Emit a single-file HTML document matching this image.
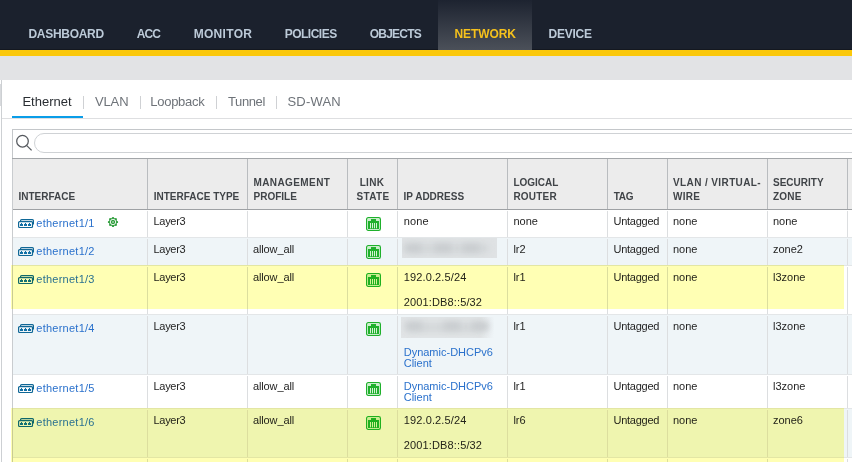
<!DOCTYPE html>
<html><head><meta charset="utf-8"><style>
html,body{margin:0;padding:0;width:852px;height:462px;overflow:hidden;background:#fff;font-family:"Liberation Sans", sans-serif}
body{position:relative}
</style></head><body>
<div style="position:absolute;left:0;top:0;width:852px;height:50px;background:#1b212d"></div>
<div style="position:absolute;left:0;top:49px;width:852px;height:1px;background:#141820"></div>
<div style="position:absolute;left:438px;top:0;width:94px;height:50px;background:linear-gradient(#1d2330,#4b5059)"></div>
<div style="position:absolute;left:0;top:50px;width:852px;height:6px;background:#fbc80b"></div>
<div style="position:absolute;left:0;top:56px;width:852px;height:24px;background:#e2e3e5"></div>
<div style="position:absolute;left:2px;top:80px;width:850px;height:382px;background:#fff"></div>
<div style="position:absolute;left:1px;top:80px;width:1px;height:382px;background:#cdd0d3"></div>
<div style="position:absolute;left:0px;top:84px;width:1px;height:22px;background:#d8dadd"></div>
<div style="position:absolute;left:2px;top:118px;width:850px;height:1px;background:#dedfe1"></div>
<div style="position:absolute;left:12px;top:116px;width:71px;height:2px;background:#0a9de8"></div>
<div style="position:absolute;left:83px;top:96px;width:1px;height:13px;background:#cfd1d4"></div>
<div style="position:absolute;left:140px;top:96px;width:1px;height:13px;background:#cfd1d4"></div>
<div style="position:absolute;left:216px;top:96px;width:1px;height:13px;background:#cfd1d4"></div>
<div style="position:absolute;left:276px;top:96px;width:1px;height:13px;background:#cfd1d4"></div>
<div style="position:absolute;left:12px;top:129px;width:850px;height:29px;border-top:1px solid #c4c7ca;border-left:1px solid #c4c7ca;box-sizing:border-box;background:#fff"></div>
<div style="position:absolute;left:34px;top:133px;width:830px;height:20px;border:1px solid #cfd2d5;border-radius:10px;box-sizing:border-box;background:#fff"></div>
<svg style="position:absolute;left:12px;top:131px" width="24" height="24" viewBox="0 0 24 24"><circle cx="10.5" cy="10.2" r="5.8" fill="none" stroke="#55595e" stroke-width="1.25"/><line x1="14.8" y1="14.6" x2="19.6" y2="19.4" stroke="#55595e" stroke-width="1.3"/></svg>
<div style="position:absolute;left:12px;top:158px;width:840px;height:52px;background:#ececec;border-top:1px solid #a3a6a9;border-bottom:1px solid #9ea1a4;box-sizing:border-box"></div>
<div style="position:absolute;left:147px;top:159px;width:1px;height:50px;background:#b9bcbf"></div>
<div style="position:absolute;left:247px;top:159px;width:1px;height:50px;background:#b9bcbf"></div>
<div style="position:absolute;left:347px;top:159px;width:1px;height:50px;background:#b9bcbf"></div>
<div style="position:absolute;left:397px;top:159px;width:1px;height:50px;background:#b9bcbf"></div>
<div style="position:absolute;left:507px;top:159px;width:1px;height:50px;background:#b9bcbf"></div>
<div style="position:absolute;left:607px;top:159px;width:1px;height:50px;background:#b9bcbf"></div>
<div style="position:absolute;left:667px;top:159px;width:1px;height:50px;background:#b9bcbf"></div>
<div style="position:absolute;left:767px;top:159px;width:1px;height:50px;background:#b9bcbf"></div>
<div style="position:absolute;left:847px;top:159px;width:1px;height:50px;background:#b9bcbf"></div>
<div style="position:absolute;left:12px;top:210px;width:840px;height:27px;background:#ffffff"></div>
<div style="position:absolute;left:147px;top:211px;width:1px;height:26px;background:#dcdee0"></div>
<div style="position:absolute;left:247px;top:211px;width:1px;height:26px;background:#dcdee0"></div>
<div style="position:absolute;left:347px;top:211px;width:1px;height:26px;background:#dcdee0"></div>
<div style="position:absolute;left:397px;top:211px;width:1px;height:26px;background:#dcdee0"></div>
<div style="position:absolute;left:507px;top:211px;width:1px;height:26px;background:#dcdee0"></div>
<div style="position:absolute;left:607px;top:211px;width:1px;height:26px;background:#dcdee0"></div>
<div style="position:absolute;left:667px;top:211px;width:1px;height:26px;background:#dcdee0"></div>
<div style="position:absolute;left:767px;top:211px;width:1px;height:26px;background:#dcdee0"></div>
<div style="position:absolute;left:847px;top:211px;width:1px;height:26px;background:#dcdee0"></div>
<div style="position:absolute;left:12px;top:238px;width:840px;height:27px;background:#eff5f8"></div>
<div style="position:absolute;left:12px;top:237px;width:840px;height:1px;background:#e3e6e8"></div>
<div style="position:absolute;left:147px;top:239px;width:1px;height:26px;background:#dcdee0"></div>
<div style="position:absolute;left:247px;top:239px;width:1px;height:26px;background:#dcdee0"></div>
<div style="position:absolute;left:347px;top:239px;width:1px;height:26px;background:#dcdee0"></div>
<div style="position:absolute;left:397px;top:239px;width:1px;height:26px;background:#dcdee0"></div>
<div style="position:absolute;left:507px;top:239px;width:1px;height:26px;background:#dcdee0"></div>
<div style="position:absolute;left:607px;top:239px;width:1px;height:26px;background:#dcdee0"></div>
<div style="position:absolute;left:667px;top:239px;width:1px;height:26px;background:#dcdee0"></div>
<div style="position:absolute;left:767px;top:239px;width:1px;height:26px;background:#dcdee0"></div>
<div style="position:absolute;left:847px;top:239px;width:1px;height:26px;background:#dcdee0"></div>
<div style="position:absolute;left:12px;top:266px;width:840px;height:48px;background:#ffffff"></div>
<div style="position:absolute;left:12px;top:265px;width:840px;height:1px;background:#e3e6e8"></div>
<div style="position:absolute;left:147px;top:267px;width:1px;height:47px;background:#dcdee0"></div>
<div style="position:absolute;left:247px;top:267px;width:1px;height:47px;background:#dcdee0"></div>
<div style="position:absolute;left:347px;top:267px;width:1px;height:47px;background:#dcdee0"></div>
<div style="position:absolute;left:397px;top:267px;width:1px;height:47px;background:#dcdee0"></div>
<div style="position:absolute;left:507px;top:267px;width:1px;height:47px;background:#dcdee0"></div>
<div style="position:absolute;left:607px;top:267px;width:1px;height:47px;background:#dcdee0"></div>
<div style="position:absolute;left:667px;top:267px;width:1px;height:47px;background:#dcdee0"></div>
<div style="position:absolute;left:767px;top:267px;width:1px;height:47px;background:#dcdee0"></div>
<div style="position:absolute;left:847px;top:267px;width:1px;height:47px;background:#dcdee0"></div>
<div style="position:absolute;left:12px;top:315px;width:840px;height:59px;background:#eff5f8"></div>
<div style="position:absolute;left:12px;top:314px;width:840px;height:1px;background:#e3e6e8"></div>
<div style="position:absolute;left:147px;top:316px;width:1px;height:58px;background:#dcdee0"></div>
<div style="position:absolute;left:247px;top:316px;width:1px;height:58px;background:#dcdee0"></div>
<div style="position:absolute;left:347px;top:316px;width:1px;height:58px;background:#dcdee0"></div>
<div style="position:absolute;left:397px;top:316px;width:1px;height:58px;background:#dcdee0"></div>
<div style="position:absolute;left:507px;top:316px;width:1px;height:58px;background:#dcdee0"></div>
<div style="position:absolute;left:607px;top:316px;width:1px;height:58px;background:#dcdee0"></div>
<div style="position:absolute;left:667px;top:316px;width:1px;height:58px;background:#dcdee0"></div>
<div style="position:absolute;left:767px;top:316px;width:1px;height:58px;background:#dcdee0"></div>
<div style="position:absolute;left:847px;top:316px;width:1px;height:58px;background:#dcdee0"></div>
<div style="position:absolute;left:12px;top:375px;width:840px;height:33px;background:#ffffff"></div>
<div style="position:absolute;left:12px;top:374px;width:840px;height:1px;background:#e3e6e8"></div>
<div style="position:absolute;left:147px;top:376px;width:1px;height:32px;background:#dcdee0"></div>
<div style="position:absolute;left:247px;top:376px;width:1px;height:32px;background:#dcdee0"></div>
<div style="position:absolute;left:347px;top:376px;width:1px;height:32px;background:#dcdee0"></div>
<div style="position:absolute;left:397px;top:376px;width:1px;height:32px;background:#dcdee0"></div>
<div style="position:absolute;left:507px;top:376px;width:1px;height:32px;background:#dcdee0"></div>
<div style="position:absolute;left:607px;top:376px;width:1px;height:32px;background:#dcdee0"></div>
<div style="position:absolute;left:667px;top:376px;width:1px;height:32px;background:#dcdee0"></div>
<div style="position:absolute;left:767px;top:376px;width:1px;height:32px;background:#dcdee0"></div>
<div style="position:absolute;left:847px;top:376px;width:1px;height:32px;background:#dcdee0"></div>
<div style="position:absolute;left:12px;top:409px;width:840px;height:48px;background:#eff5f8"></div>
<div style="position:absolute;left:12px;top:408px;width:840px;height:1px;background:#e3e6e8"></div>
<div style="position:absolute;left:147px;top:410px;width:1px;height:47px;background:#dcdee0"></div>
<div style="position:absolute;left:247px;top:410px;width:1px;height:47px;background:#dcdee0"></div>
<div style="position:absolute;left:347px;top:410px;width:1px;height:47px;background:#dcdee0"></div>
<div style="position:absolute;left:397px;top:410px;width:1px;height:47px;background:#dcdee0"></div>
<div style="position:absolute;left:507px;top:410px;width:1px;height:47px;background:#dcdee0"></div>
<div style="position:absolute;left:607px;top:410px;width:1px;height:47px;background:#dcdee0"></div>
<div style="position:absolute;left:667px;top:410px;width:1px;height:47px;background:#dcdee0"></div>
<div style="position:absolute;left:767px;top:410px;width:1px;height:47px;background:#dcdee0"></div>
<div style="position:absolute;left:847px;top:410px;width:1px;height:47px;background:#dcdee0"></div>
<div style="position:absolute;left:12px;top:458px;width:840px;height:22px;background:#ffffff"></div>
<div style="position:absolute;left:12px;top:457px;width:840px;height:1px;background:#e3e6e8"></div>
<div style="position:absolute;left:147px;top:459px;width:1px;height:21px;background:#dcdee0"></div>
<div style="position:absolute;left:247px;top:459px;width:1px;height:21px;background:#dcdee0"></div>
<div style="position:absolute;left:347px;top:459px;width:1px;height:21px;background:#dcdee0"></div>
<div style="position:absolute;left:397px;top:459px;width:1px;height:21px;background:#dcdee0"></div>
<div style="position:absolute;left:507px;top:459px;width:1px;height:21px;background:#dcdee0"></div>
<div style="position:absolute;left:607px;top:459px;width:1px;height:21px;background:#dcdee0"></div>
<div style="position:absolute;left:667px;top:459px;width:1px;height:21px;background:#dcdee0"></div>
<div style="position:absolute;left:767px;top:459px;width:1px;height:21px;background:#dcdee0"></div>
<div style="position:absolute;left:847px;top:459px;width:1px;height:21px;background:#dcdee0"></div>
<div style="position:absolute;left:12px;top:159px;width:1px;height:303px;background:#c9cccf"></div>
<div style="position:absolute;left:18px;top:219px;width:16px;height:10px"><svg style="display:block" width="16" height="10" viewBox="0 0 16 10"><path d="M2.6 2.2 V1.6 Q2.6 0.6 3.6 0.6 H14.4 Q15.4 0.6 15.4 1.6 V5.5" fill="none" stroke="#0f6796" stroke-width="1.2"/><rect x="0.6" y="2.6" width="13.9" height="5.9" rx="1" fill="none" stroke="#0f6796" stroke-width="1.2"/><path d="M2 7 V5 H3 V4 H4 V5 H5 V7Z M6 7 V5 H7 V4 H8 V5 H9 V7Z M10 7 V5 H11 V4 H12 V5 H13 V7Z" fill="#1270a6"/></svg></div>
<div style="position:absolute;left:366px;top:217px;width:15px;height:14px"><svg style="display:block" width="15" height="14" viewBox="0 0 15 14"><rect x="0.65" y="0.65" width="13.7" height="12.7" rx="1.6" fill="#fff" stroke="#1fb02c" stroke-width="1.3"/><rect x="1.8" y="1.5" width="11.4" height="2.6" fill="#c9eec9"/><path d="M2 12 V4 H5 V2 H10 V4 H13 V12Z" fill="#1fb02c"/><path d="M4.5 6 V11.3 M6.5 6 V11.3 M8.5 6 V11.3 M10.5 6 V11.3" stroke="#d4f2d4" stroke-width="1"/></svg></div>
<div style="position:absolute;left:107px;top:216px;width:12px;height:12px"><svg style="display:block" width="12" height="12" viewBox="0 0 12 12"><g fill="#34a042"><circle cx="6" cy="6" r="4"/><rect x="4.9" y="0.9" width="2.2" height="10.2" rx="0.9"/><rect x="0.9" y="4.9" width="10.2" height="2.2" rx="0.9"/><rect x="4.9" y="0.9" width="2.2" height="10.2" rx="0.9" transform="rotate(45 6 6)"/><rect x="0.9" y="4.9" width="10.2" height="2.2" rx="0.9" transform="rotate(45 6 6)"/></g><circle cx="6" cy="6" r="2.7" fill="none" stroke="#fff" stroke-width="0.9"/><circle cx="6" cy="6" r="1" fill="#9fd0a5"/></svg></div>
<div style="position:absolute;left:18px;top:247px;width:16px;height:10px"><svg style="display:block" width="16" height="10" viewBox="0 0 16 10"><path d="M2.6 2.2 V1.6 Q2.6 0.6 3.6 0.6 H14.4 Q15.4 0.6 15.4 1.6 V5.5" fill="none" stroke="#0f6796" stroke-width="1.2"/><rect x="0.6" y="2.6" width="13.9" height="5.9" rx="1" fill="none" stroke="#0f6796" stroke-width="1.2"/><path d="M2 7 V5 H3 V4 H4 V5 H5 V7Z M6 7 V5 H7 V4 H8 V5 H9 V7Z M10 7 V5 H11 V4 H12 V5 H13 V7Z" fill="#1270a6"/></svg></div>
<div style="position:absolute;left:366px;top:245px;width:15px;height:14px"><svg style="display:block" width="15" height="14" viewBox="0 0 15 14"><rect x="0.65" y="0.65" width="13.7" height="12.7" rx="1.6" fill="#fff" stroke="#1fb02c" stroke-width="1.3"/><rect x="1.8" y="1.5" width="11.4" height="2.6" fill="#c9eec9"/><path d="M2 12 V4 H5 V2 H10 V4 H13 V12Z" fill="#1fb02c"/><path d="M4.5 6 V11.3 M6.5 6 V11.3 M8.5 6 V11.3 M10.5 6 V11.3" stroke="#d4f2d4" stroke-width="1"/></svg></div>
<div style="position:absolute;left:402px;top:238px;width:95px;height:20px;background:#dfe2e4;overflow:hidden"><div style="position:absolute;left:6px;top:5.5px;width:81px;height:9px;border-radius:4px;background:#d3d7d9;filter:blur(3px)"></div><div style="position:absolute;left:2px;top:6px;width:18px;height:8px;border-radius:4px;background:#c8cccf;filter:blur(3px)"></div><div style="position:absolute;left:32px;top:6px;width:18px;height:8px;border-radius:4px;background:#c8cccf;filter:blur(3px)"></div><div style="position:absolute;left:60px;top:6px;width:18px;height:8px;border-radius:4px;background:#c8cccf;filter:blur(3px)"></div></div>
<div style="position:absolute;left:18px;top:275px;width:16px;height:10px"><svg style="display:block" width="16" height="10" viewBox="0 0 16 10"><path d="M2.6 2.2 V1.6 Q2.6 0.6 3.6 0.6 H14.4 Q15.4 0.6 15.4 1.6 V5.5" fill="none" stroke="#0f6796" stroke-width="1.2"/><rect x="0.6" y="2.6" width="13.9" height="5.9" rx="1" fill="none" stroke="#0f6796" stroke-width="1.2"/><path d="M2 7 V5 H3 V4 H4 V5 H5 V7Z M6 7 V5 H7 V4 H8 V5 H9 V7Z M10 7 V5 H11 V4 H12 V5 H13 V7Z" fill="#1270a6"/></svg></div>
<div style="position:absolute;left:366px;top:273px;width:15px;height:14px"><svg style="display:block" width="15" height="14" viewBox="0 0 15 14"><rect x="0.65" y="0.65" width="13.7" height="12.7" rx="1.6" fill="#fff" stroke="#1fb02c" stroke-width="1.3"/><rect x="1.8" y="1.5" width="11.4" height="2.6" fill="#c9eec9"/><path d="M2 12 V4 H5 V2 H10 V4 H13 V12Z" fill="#1fb02c"/><path d="M4.5 6 V11.3 M6.5 6 V11.3 M8.5 6 V11.3 M10.5 6 V11.3" stroke="#d4f2d4" stroke-width="1"/></svg></div>
<div style="position:absolute;left:18px;top:324px;width:16px;height:10px"><svg style="display:block" width="16" height="10" viewBox="0 0 16 10"><path d="M2.6 2.2 V1.6 Q2.6 0.6 3.6 0.6 H14.4 Q15.4 0.6 15.4 1.6 V5.5" fill="none" stroke="#0f6796" stroke-width="1.2"/><rect x="0.6" y="2.6" width="13.9" height="5.9" rx="1" fill="none" stroke="#0f6796" stroke-width="1.2"/><path d="M2 7 V5 H3 V4 H4 V5 H5 V7Z M6 7 V5 H7 V4 H8 V5 H9 V7Z M10 7 V5 H11 V4 H12 V5 H13 V7Z" fill="#1270a6"/></svg></div>
<div style="position:absolute;left:366px;top:322px;width:15px;height:14px"><svg style="display:block" width="15" height="14" viewBox="0 0 15 14"><rect x="0.65" y="0.65" width="13.7" height="12.7" rx="1.6" fill="#fff" stroke="#1fb02c" stroke-width="1.3"/><rect x="1.8" y="1.5" width="11.4" height="2.6" fill="#c9eec9"/><path d="M2 12 V4 H5 V2 H10 V4 H13 V12Z" fill="#1fb02c"/><path d="M4.5 6 V11.3 M6.5 6 V11.3 M8.5 6 V11.3 M10.5 6 V11.3" stroke="#d4f2d4" stroke-width="1"/></svg></div>
<div style="position:absolute;left:401px;top:317px;width:93px;height:21px;background:linear-gradient(90deg,#e1e4e6 85%,rgba(225,228,230,0));overflow:hidden"><div style="position:absolute;left:6px;top:6.0px;width:79px;height:9px;border-radius:4px;background:#d3d7d9;filter:blur(3px)"></div><div style="position:absolute;left:4px;top:5px;width:18px;height:8px;border-radius:4px;background:#c8cccf;filter:blur(3px)"></div><div style="position:absolute;left:42px;top:5px;width:18px;height:8px;border-radius:4px;background:#c8cccf;filter:blur(3px)"></div><div style="position:absolute;left:70px;top:5px;width:18px;height:8px;border-radius:4px;background:#c8cccf;filter:blur(3px)"></div></div>
<div style="position:absolute;left:18px;top:384px;width:16px;height:10px"><svg style="display:block" width="16" height="10" viewBox="0 0 16 10"><path d="M2.6 2.2 V1.6 Q2.6 0.6 3.6 0.6 H14.4 Q15.4 0.6 15.4 1.6 V5.5" fill="none" stroke="#0f6796" stroke-width="1.2"/><rect x="0.6" y="2.6" width="13.9" height="5.9" rx="1" fill="none" stroke="#0f6796" stroke-width="1.2"/><path d="M2 7 V5 H3 V4 H4 V5 H5 V7Z M6 7 V5 H7 V4 H8 V5 H9 V7Z M10 7 V5 H11 V4 H12 V5 H13 V7Z" fill="#1270a6"/></svg></div>
<div style="position:absolute;left:366px;top:382px;width:15px;height:14px"><svg style="display:block" width="15" height="14" viewBox="0 0 15 14"><rect x="0.65" y="0.65" width="13.7" height="12.7" rx="1.6" fill="#fff" stroke="#1fb02c" stroke-width="1.3"/><rect x="1.8" y="1.5" width="11.4" height="2.6" fill="#c9eec9"/><path d="M2 12 V4 H5 V2 H10 V4 H13 V12Z" fill="#1fb02c"/><path d="M4.5 6 V11.3 M6.5 6 V11.3 M8.5 6 V11.3 M10.5 6 V11.3" stroke="#d4f2d4" stroke-width="1"/></svg></div>
<div style="position:absolute;left:18px;top:418px;width:16px;height:10px"><svg style="display:block" width="16" height="10" viewBox="0 0 16 10"><path d="M2.6 2.2 V1.6 Q2.6 0.6 3.6 0.6 H14.4 Q15.4 0.6 15.4 1.6 V5.5" fill="none" stroke="#0f6796" stroke-width="1.2"/><rect x="0.6" y="2.6" width="13.9" height="5.9" rx="1" fill="none" stroke="#0f6796" stroke-width="1.2"/><path d="M2 7 V5 H3 V4 H4 V5 H5 V7Z M6 7 V5 H7 V4 H8 V5 H9 V7Z M10 7 V5 H11 V4 H12 V5 H13 V7Z" fill="#1270a6"/></svg></div>
<div style="position:absolute;left:366px;top:416px;width:15px;height:14px"><svg style="display:block" width="15" height="14" viewBox="0 0 15 14"><rect x="0.65" y="0.65" width="13.7" height="12.7" rx="1.6" fill="#fff" stroke="#1fb02c" stroke-width="1.3"/><rect x="1.8" y="1.5" width="11.4" height="2.6" fill="#c9eec9"/><path d="M2 12 V4 H5 V2 H10 V4 H13 V12Z" fill="#1fb02c"/><path d="M4.5 6 V11.3 M6.5 6 V11.3 M8.5 6 V11.3 M10.5 6 V11.3" stroke="#d4f2d4" stroke-width="1"/></svg></div>
<div style="position:absolute;left:28.50px;top:28.04px;font-size:12px;line-height:12px;font-weight:bold;color:#bccad8;letter-spacing:-0.3px;white-space:nowrap">DASHBOARD</div>
<div style="position:absolute;left:136.80px;top:28.04px;font-size:12px;line-height:12px;font-weight:bold;color:#bccad8;letter-spacing:-0.9px;white-space:nowrap">ACC</div>
<div style="position:absolute;left:193.70px;top:28.04px;font-size:12px;line-height:12px;font-weight:bold;color:#bccad8;letter-spacing:0.3px;white-space:nowrap">MONITOR</div>
<div style="position:absolute;left:284.70px;top:28.04px;font-size:12px;line-height:12px;font-weight:bold;color:#bccad8;letter-spacing:-0.5px;white-space:nowrap">POLICIES</div>
<div style="position:absolute;left:369.80px;top:28.04px;font-size:12px;line-height:12px;font-weight:bold;color:#bccad8;letter-spacing:-0.8px;white-space:nowrap">OBJECTS</div>
<div style="position:absolute;left:548.60px;top:28.04px;font-size:12px;line-height:12px;font-weight:bold;color:#bccad8;letter-spacing:-0.25px;white-space:nowrap">DEVICE</div>
<div style="position:absolute;left:454.50px;top:28.04px;font-size:12px;line-height:12px;font-weight:bold;color:#f5c11c;letter-spacing:-0.1px;white-space:nowrap">NETWORK</div>
<div style="position:absolute;left:22.40px;top:95.00px;font-size:13px;line-height:13px;font-weight:normal;color:#2a2e33;letter-spacing:0px;white-space:nowrap">Ethernet</div>
<div style="position:absolute;left:94.90px;top:95.00px;font-size:13px;line-height:13px;font-weight:normal;color:#6e7379;letter-spacing:-0.09px;white-space:nowrap">VLAN</div>
<div style="position:absolute;left:150.30px;top:95.00px;font-size:13px;line-height:13px;font-weight:normal;color:#6e7379;letter-spacing:-0.28px;white-space:nowrap">Loopback</div>
<div style="position:absolute;left:228.00px;top:95.00px;font-size:13px;line-height:13px;font-weight:normal;color:#6e7379;letter-spacing:-0.4px;white-space:nowrap">Tunnel</div>
<div style="position:absolute;left:287.50px;top:95.00px;font-size:13px;line-height:13px;font-weight:normal;color:#6e7379;letter-spacing:0.2px;white-space:nowrap">SD-WAN</div>
<div style="position:absolute;left:18.50px;top:191.53px;font-size:10px;line-height:10px;font-weight:bold;color:#404448;letter-spacing:0px;white-space:nowrap">INTERFACE</div>
<div style="position:absolute;left:153.70px;top:191.53px;font-size:10px;line-height:10px;font-weight:bold;color:#404448;letter-spacing:0px;white-space:nowrap">INTERFACE TYPE</div>
<div style="position:absolute;left:253.50px;top:177.53px;font-size:10px;line-height:10px;font-weight:bold;color:#404448;letter-spacing:0.4px;white-space:nowrap">MANAGEMENT</div>
<div style="position:absolute;left:253.50px;top:191.53px;font-size:10px;line-height:10px;font-weight:bold;color:#404448;letter-spacing:0px;white-space:nowrap">PROFILE</div>
<div style="position:absolute;left:359.70px;top:177.53px;font-size:10px;line-height:10px;font-weight:bold;color:#404448;letter-spacing:0.3px;white-space:nowrap">LINK</div>
<div style="position:absolute;left:356.59px;top:191.53px;font-size:10px;line-height:10px;font-weight:bold;color:#404448;letter-spacing:0.3px;white-space:nowrap">STATE</div>
<div style="position:absolute;left:403.50px;top:191.53px;font-size:10px;line-height:10px;font-weight:bold;color:#404448;letter-spacing:0px;white-space:nowrap">IP ADDRESS</div>
<div style="position:absolute;left:513.40px;top:177.53px;font-size:10px;line-height:10px;font-weight:bold;color:#404448;letter-spacing:0px;white-space:nowrap">LOGICAL</div>
<div style="position:absolute;left:513.40px;top:191.53px;font-size:10px;line-height:10px;font-weight:bold;color:#404448;letter-spacing:0.2px;white-space:nowrap">ROUTER</div>
<div style="position:absolute;left:613.80px;top:191.53px;font-size:10px;line-height:10px;font-weight:bold;color:#404448;letter-spacing:-0.3px;white-space:nowrap">TAG</div>
<div style="position:absolute;left:673.00px;top:177.53px;font-size:10px;line-height:10px;font-weight:bold;color:#404448;letter-spacing:0.39px;white-space:nowrap">VLAN / VIRTUAL-</div>
<div style="position:absolute;left:673.00px;top:191.53px;font-size:10px;line-height:10px;font-weight:bold;color:#404448;letter-spacing:0.3px;white-space:nowrap">WIRE</div>
<div style="position:absolute;left:773.00px;top:177.53px;font-size:10px;line-height:10px;font-weight:bold;color:#404448;letter-spacing:0px;white-space:nowrap">SECURITY</div>
<div style="position:absolute;left:773.00px;top:191.53px;font-size:10px;line-height:10px;font-weight:bold;color:#404448;letter-spacing:0.2px;white-space:nowrap">ZONE</div>
<div style="position:absolute;left:36.30px;top:217.89px;font-size:11px;line-height:11px;font-weight:normal;color:#2a71cc;letter-spacing:0.25px;white-space:nowrap">ethernet1/1</div>
<div style="position:absolute;left:153.50px;top:215.69px;font-size:11px;line-height:11px;font-weight:normal;color:#242424;letter-spacing:-0.3px;white-space:nowrap">Layer3</div>
<div style="position:absolute;left:403.70px;top:215.69px;font-size:11px;line-height:11px;font-weight:normal;color:#242424;letter-spacing:0.14px;white-space:nowrap">none</div>
<div style="position:absolute;left:513.40px;top:215.69px;font-size:11px;line-height:11px;font-weight:normal;color:#242424;letter-spacing:0px;white-space:nowrap">none</div>
<div style="position:absolute;left:613.60px;top:215.69px;font-size:11px;line-height:11px;font-weight:normal;color:#242424;letter-spacing:-0.28px;white-space:nowrap">Untagged</div>
<div style="position:absolute;left:673.00px;top:215.69px;font-size:11px;line-height:11px;font-weight:normal;color:#242424;letter-spacing:0px;white-space:nowrap">none</div>
<div style="position:absolute;left:773.00px;top:215.69px;font-size:11px;line-height:11px;font-weight:normal;color:#242424;letter-spacing:0px;white-space:nowrap">none</div>
<div style="position:absolute;left:36.30px;top:245.89px;font-size:11px;line-height:11px;font-weight:normal;color:#2a71cc;letter-spacing:0.25px;white-space:nowrap">ethernet1/2</div>
<div style="position:absolute;left:153.50px;top:243.69px;font-size:11px;line-height:11px;font-weight:normal;color:#242424;letter-spacing:-0.3px;white-space:nowrap">Layer3</div>
<div style="position:absolute;left:253.00px;top:243.69px;font-size:11px;line-height:11px;font-weight:normal;color:#242424;letter-spacing:-0.13px;white-space:nowrap">allow_all</div>
<div style="position:absolute;left:513.40px;top:243.69px;font-size:11px;line-height:11px;font-weight:normal;color:#242424;letter-spacing:0px;white-space:nowrap">lr2</div>
<div style="position:absolute;left:613.60px;top:243.69px;font-size:11px;line-height:11px;font-weight:normal;color:#242424;letter-spacing:-0.28px;white-space:nowrap">Untagged</div>
<div style="position:absolute;left:673.00px;top:243.69px;font-size:11px;line-height:11px;font-weight:normal;color:#242424;letter-spacing:0px;white-space:nowrap">none</div>
<div style="position:absolute;left:773.00px;top:243.69px;font-size:11px;line-height:11px;font-weight:normal;color:#242424;letter-spacing:0px;white-space:nowrap">zone2</div>
<div style="position:absolute;left:36.30px;top:273.89px;font-size:11px;line-height:11px;font-weight:normal;color:#2a71cc;letter-spacing:0.25px;white-space:nowrap">ethernet1/3</div>
<div style="position:absolute;left:153.50px;top:271.69px;font-size:11px;line-height:11px;font-weight:normal;color:#242424;letter-spacing:-0.3px;white-space:nowrap">Layer3</div>
<div style="position:absolute;left:253.00px;top:271.69px;font-size:11px;line-height:11px;font-weight:normal;color:#242424;letter-spacing:-0.13px;white-space:nowrap">allow_all</div>
<div style="position:absolute;left:403.70px;top:271.69px;font-size:11px;line-height:11px;font-weight:normal;color:#242424;letter-spacing:0.14px;white-space:nowrap">192.0.2.5/24</div>
<div style="position:absolute;left:403.70px;top:296.69px;font-size:11px;line-height:11px;font-weight:normal;color:#242424;letter-spacing:0.14px;white-space:nowrap">2001:DB8::5/32</div>
<div style="position:absolute;left:513.40px;top:271.69px;font-size:11px;line-height:11px;font-weight:normal;color:#242424;letter-spacing:0px;white-space:nowrap">lr1</div>
<div style="position:absolute;left:613.60px;top:271.69px;font-size:11px;line-height:11px;font-weight:normal;color:#242424;letter-spacing:-0.28px;white-space:nowrap">Untagged</div>
<div style="position:absolute;left:673.00px;top:271.69px;font-size:11px;line-height:11px;font-weight:normal;color:#242424;letter-spacing:0px;white-space:nowrap">none</div>
<div style="position:absolute;left:773.00px;top:271.69px;font-size:11px;line-height:11px;font-weight:normal;color:#242424;letter-spacing:0px;white-space:nowrap">l3zone</div>
<div style="position:absolute;left:36.30px;top:322.89px;font-size:11px;line-height:11px;font-weight:normal;color:#2a71cc;letter-spacing:0.25px;white-space:nowrap">ethernet1/4</div>
<div style="position:absolute;left:153.50px;top:320.69px;font-size:11px;line-height:11px;font-weight:normal;color:#242424;letter-spacing:-0.3px;white-space:nowrap">Layer3</div>
<div style="position:absolute;left:403.70px;top:346.69px;font-size:11px;line-height:11px;font-weight:normal;color:#2a71cc;letter-spacing:0px;white-space:nowrap">Dynamic-DHCPv6</div>
<div style="position:absolute;left:403.70px;top:357.69px;font-size:11px;line-height:11px;font-weight:normal;color:#2a71cc;letter-spacing:0px;white-space:nowrap">Client</div>
<div style="position:absolute;left:513.40px;top:320.69px;font-size:11px;line-height:11px;font-weight:normal;color:#242424;letter-spacing:0px;white-space:nowrap">lr1</div>
<div style="position:absolute;left:613.60px;top:320.69px;font-size:11px;line-height:11px;font-weight:normal;color:#242424;letter-spacing:-0.28px;white-space:nowrap">Untagged</div>
<div style="position:absolute;left:673.00px;top:320.69px;font-size:11px;line-height:11px;font-weight:normal;color:#242424;letter-spacing:0px;white-space:nowrap">none</div>
<div style="position:absolute;left:773.00px;top:320.69px;font-size:11px;line-height:11px;font-weight:normal;color:#242424;letter-spacing:0px;white-space:nowrap">l3zone</div>
<div style="position:absolute;left:36.30px;top:382.89px;font-size:11px;line-height:11px;font-weight:normal;color:#2a71cc;letter-spacing:0.25px;white-space:nowrap">ethernet1/5</div>
<div style="position:absolute;left:153.50px;top:380.69px;font-size:11px;line-height:11px;font-weight:normal;color:#242424;letter-spacing:-0.3px;white-space:nowrap">Layer3</div>
<div style="position:absolute;left:253.00px;top:380.69px;font-size:11px;line-height:11px;font-weight:normal;color:#242424;letter-spacing:-0.13px;white-space:nowrap">allow_all</div>
<div style="position:absolute;left:403.70px;top:380.69px;font-size:11px;line-height:11px;font-weight:normal;color:#2a71cc;letter-spacing:0px;white-space:nowrap">Dynamic-DHCPv6</div>
<div style="position:absolute;left:403.70px;top:391.69px;font-size:11px;line-height:11px;font-weight:normal;color:#2a71cc;letter-spacing:0px;white-space:nowrap">Client</div>
<div style="position:absolute;left:513.40px;top:380.69px;font-size:11px;line-height:11px;font-weight:normal;color:#242424;letter-spacing:0px;white-space:nowrap">lr1</div>
<div style="position:absolute;left:613.60px;top:380.69px;font-size:11px;line-height:11px;font-weight:normal;color:#242424;letter-spacing:-0.28px;white-space:nowrap">Untagged</div>
<div style="position:absolute;left:673.00px;top:380.69px;font-size:11px;line-height:11px;font-weight:normal;color:#242424;letter-spacing:0px;white-space:nowrap">none</div>
<div style="position:absolute;left:773.00px;top:380.69px;font-size:11px;line-height:11px;font-weight:normal;color:#242424;letter-spacing:0px;white-space:nowrap">l3zone</div>
<div style="position:absolute;left:36.30px;top:416.89px;font-size:11px;line-height:11px;font-weight:normal;color:#2a71cc;letter-spacing:0.25px;white-space:nowrap">ethernet1/6</div>
<div style="position:absolute;left:153.50px;top:414.69px;font-size:11px;line-height:11px;font-weight:normal;color:#242424;letter-spacing:-0.3px;white-space:nowrap">Layer3</div>
<div style="position:absolute;left:253.00px;top:414.69px;font-size:11px;line-height:11px;font-weight:normal;color:#242424;letter-spacing:-0.13px;white-space:nowrap">allow_all</div>
<div style="position:absolute;left:403.70px;top:414.69px;font-size:11px;line-height:11px;font-weight:normal;color:#242424;letter-spacing:0.14px;white-space:nowrap">192.0.2.5/24</div>
<div style="position:absolute;left:403.70px;top:440.19px;font-size:11px;line-height:11px;font-weight:normal;color:#242424;letter-spacing:0.14px;white-space:nowrap">2001:DB8::5/32</div>
<div style="position:absolute;left:513.40px;top:414.69px;font-size:11px;line-height:11px;font-weight:normal;color:#242424;letter-spacing:0px;white-space:nowrap">lr6</div>
<div style="position:absolute;left:613.60px;top:414.69px;font-size:11px;line-height:11px;font-weight:normal;color:#242424;letter-spacing:-0.28px;white-space:nowrap">Untagged</div>
<div style="position:absolute;left:673.00px;top:414.69px;font-size:11px;line-height:11px;font-weight:normal;color:#242424;letter-spacing:0px;white-space:nowrap">none</div>
<div style="position:absolute;left:773.00px;top:414.69px;font-size:11px;line-height:11px;font-weight:normal;color:#242424;letter-spacing:0px;white-space:nowrap">zone6</div>
<div style="position:absolute;left:11px;top:265px;width:833px;height:44px;background:#ffffb4;mix-blend-mode:multiply"></div>
<div style="position:absolute;left:11px;top:408px;width:833px;height:49px;background:#ffffb4;mix-blend-mode:multiply"></div>
<div style="position:absolute;left:11px;top:457px;width:833px;height:23px;background:#ffffb4;mix-blend-mode:multiply"></div>
</body></html>
